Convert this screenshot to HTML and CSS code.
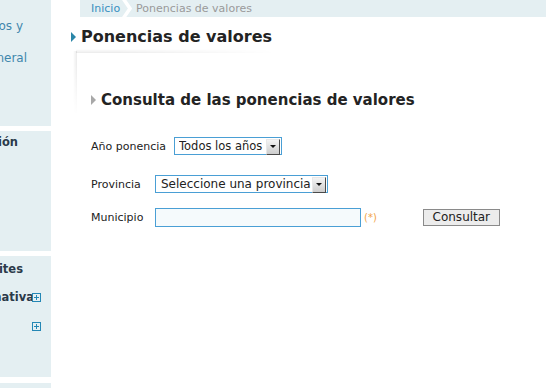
FILE: index.html
```html
<!DOCTYPE html>
<html lang="es">
<head>
<meta charset="utf-8">
<title>Ponencias de valores</title>
<link rel="stylesheet" href="styles.css">
</head>
<body>
<div class="page">
  <aside class="sidebar">
    <div class="side-block b1">
      <div class="side-row link r-os">Procedimientos y</div>
      <div class="side-row link r-gen">Información general</div>
    </div>
    <div class="side-block b2">
      <div class="side-row head r-ion">Información</div>
    </div>
    <div class="side-block b3">
      <div class="side-row head r-tram">Trámites</div>
      <div class="side-row head r-norm">Normativa<span class="plus"></span></div>
      <div class="side-row head r-plus"><span class="plus"></span></div>
    </div>
    <div class="side-block b4"></div>
  </aside>

  <main class="content">
    <nav class="crumbs">
      <a class="crumb-home" href="#">Inicio</a>
      <svg class="crumb-sep" width="10" height="17" viewBox="0 0 10 17"><polyline points="1.5,-1 8,8.5 1.5,18" fill="none" stroke="#ffffff" stroke-width="3.5"/></svg>
      <span class="crumb-current">Ponencias de valores</span>
    </nav>

    <h1 class="title">Ponencias de valores</h1>

    <section class="panel">
      <h2 class="subtitle">Consulta de las ponencias de valores</h2>
      <form class="form">
        <div class="row row-year">
          <label class="lbl">Año ponencia</label>
          <span class="select-wrap"><select class="select sel-year"><option>Todos los años</option></select></span>
        </div>
        <div class="row row-prov">
          <label class="lbl lbl-col">Provincia</label>
          <span class="select-wrap"><select class="select sel-prov"><option>Seleccione una provincia</option></select></span>
        </div>
        <div class="row row-mun">
          <label class="lbl lbl-col">Municipio</label>
          <input class="text-input" type="text">
          <span class="req">(*)</span>
          <button class="btn" type="button">Consultar</button>
        </div>
      </form>
    </section>
  </main>
</div>
</body>
</html>
```

FILE: styles.css
```css
* { box-sizing: border-box; }

html, body { margin: 0; padding: 0; }

body {
  font-family: "DejaVu Sans", Verdana, sans-serif;
  color: #222;
  background: #fff;
  overflow: hidden;
}

.page {
  display: flex;
  height: 388px;
}

/* ---------- sidebar ---------- */
.sidebar {
  width: 51px;
  flex: none;
  display: flex;
  flex-direction: column;
  gap: 5px;
}

.side-block {
  background: #e4eff2;
  overflow: hidden;
}

.b1 { height: 126px; padding-top: 18px; }
.b2 { height: 120px; padding-top: 3px; }
.b3 { height: 121px; padding-top: 5px; }
.b4 { flex: 1; margin-top: 1px; }

.side-row {
  display: flex;
  justify-content: flex-end;
  align-items: center;
  white-space: nowrap;
  line-height: 16px;
  height: 16px;
}

.side-row.link { color: #3f87ad; font-size: 12px; }
.side-row.head { color: #2b3a4a; font-weight: bold; font-size: 11.5px; }

.r-os   { padding-right: 28px; }
.r-gen  { padding-right: 24px; margin-top: 16px; }
.r-ion  { padding-right: 33px; }
.r-tram { padding-right: 28px; }
.r-norm { padding-right: 10px; margin-top: 12px; }
.r-plus { padding-right: 10px; margin-top: 13px; }

.plus {
  flex: none;
  position: relative;
  width: 9px;
  height: 9px;
  border: 1px solid #2487b5;
  background: #e4eff2;
}
.r-norm .plus { margin-left: -2px; }
.plus::before,
.plus::after {
  content: "";
  position: absolute;
  background: #2487b5;
}
.plus::before { left: 1px; right: 1px; top: 3px; height: 1px; }
.plus::after { top: 1px; bottom: 1px; left: 3px; width: 1px; }

/* ---------- main ---------- */
.content {
  flex: 1;
  min-width: 0;
  margin-left: 21px;
}

.crumbs {
  margin-left: 8px;
  height: 17px;
  background: #e4eff2;
  display: flex;
  align-items: center;
  padding-left: 11px;
  font-size: 11px;
  line-height: 17px;
}

.crumb-home { color: #3a8fc0; text-decoration: none; }
.crumb-sep { margin: 0 4px 0 2px; display: block; }
.crumb-current { color: #9a9a9a; }

.title {
  margin: 10px 0 0;
  font-size: 16px;
  line-height: 20px;
  font-weight: bold;
  color: #232323;
  display: flex;
  align-items: center;
}
.title::before {
  content: "";
  width: 0;
  height: 0;
  border-top: 5px solid transparent;
  border-bottom: 5px solid transparent;
  border-left: 5px solid #2a86a8;
  margin: 0 5px 0 -1px;
}

.panel {
  position: relative;
  margin: 6px 0 0 5px;
  padding: 37px 0 0 14px;
}
.panel::before,
.panel::after {
  content: "";
  position: absolute;
  pointer-events: none;
}
.panel::before {
  left: -1px;
  top: -4px;
  width: 200px;
  height: 4px;
  background: linear-gradient(to top, rgba(0, 0, 0, 0.08), rgba(0, 0, 0, 0));
  -webkit-mask-image: linear-gradient(to right, #000 20%, transparent);
  mask-image: linear-gradient(to right, #000 20%, transparent);
}
.panel::after {
  left: -4px;
  top: -2px;
  width: 4px;
  height: 64px;
  background: linear-gradient(to left, rgba(0, 0, 0, 0.08), rgba(0, 0, 0, 0));
  -webkit-mask-image: linear-gradient(to bottom, #000 20%, transparent);
  mask-image: linear-gradient(to bottom, #000 20%, transparent);
}

.subtitle {
  margin: 0;
  font-size: 15px;
  line-height: 20px;
  font-weight: bold;
  color: #232323;
  display: flex;
  align-items: center;
}
.subtitle::before {
  content: "";
  width: 0;
  height: 0;
  border-top: 5px solid transparent;
  border-bottom: 5px solid transparent;
  border-left: 5px solid #a8a8a8;
  margin-right: 5px;
}

/* ---------- form ---------- */
.form { margin: 0; }

.row {
  display: flex;
  align-items: center;
  font-size: 11px;
}
.row-year { margin-top: 27px; height: 18px; }
.row-prov { margin-top: 20px; height: 18px; }
.row-mun  { margin-top: 15px; height: 19px; }

.lbl { color: #222; }
.row-year .lbl { margin-right: 8px; }
.lbl-col { width: 64px; flex: none; }

.select-wrap {
  position: relative;
  display: inline-block;
  height: 18px;
}
.select-wrap::after {
  content: "";
  position: absolute;
  right: 2px;
  top: 2px;
  width: 12px;
  height: 14px;
  background: linear-gradient(#f4f4f4, #cdcdcd);
  border-top: 1px solid #e8e8e8;
  border-left: 1px solid #e8e8e8;
  border-right: 1px solid #4a4a4a;
  border-bottom: 1px solid #4a4a4a;
  pointer-events: none;
}
.select-wrap::before {
  content: "";
  position: absolute;
  right: 6px;
  top: 8px;
  width: 0;
  height: 0;
  border-left: 3px solid transparent;
  border-right: 3px solid transparent;
  border-top: 3px solid #111;
  z-index: 1;
  pointer-events: none;
}

.select {
  -webkit-appearance: none;
  appearance: none;
  height: 18px;
  border: 1px solid #4a9fd5;
  border-radius: 0;
  background: #fff;
  color: #222;
  font-family: "DejaVu Sans", Verdana, sans-serif;
  font-size: 12px;
  padding: 0 12px 0 4px;
  margin: 0;
  display: block;
  text-overflow: clip;
}
.sel-year { width: 108px; font-size: 11.5px; }
.sel-prov { width: 173px; padding-left: 5px; }

.text-input {
  width: 206px;
  height: 19px;
  border: 1px solid #4a9fd5;
  border-radius: 0;
  background: #f5fafc;
  margin: 0;
  padding: 0 3px;
  font-family: "DejaVu Sans", Verdana, sans-serif;
  font-size: 12px;
}

.req {
  color: #f2a446;
  font-size: 10px;
  margin-left: 3px;
}

.btn {
  margin-left: 46px;
  width: 77px;
  height: 17px;
  padding: 0;
  background: #ececec;
  border: 1px solid #8a8a8a;
  border-radius: 0;
  font-family: "DejaVu Sans", Verdana, sans-serif;
  font-size: 12px;
  line-height: 15px;
  color: #222;
}
```
